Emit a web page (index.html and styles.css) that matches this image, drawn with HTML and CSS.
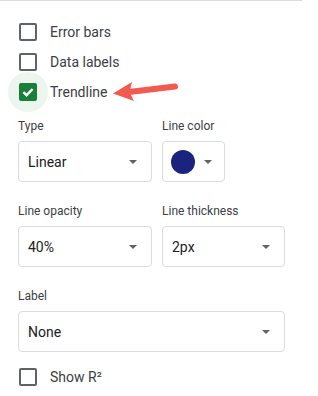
FILE: index.html
```html
<!DOCTYPE html>
<html lang="en">
<head>
    <meta charset="UTF-8">
    <meta name="viewport" content="width=device-width, initial-scale=1.0">
    <title>Trendline</title>
    <link rel="stylesheet" href="styles.css">
</head>
<body>
    <div class="top-line"></div>

    <div class="panel">
        <!-- Opciones de serie -->
        <div class="checks">
            <label class="check-row"><span class="box"></span>Error bars</label>
            <label class="check-row"><span class="box"></span>Data labels</label>
            <label class="check-row">
                <span class="box checked">
                    <svg width="14" height="14" viewBox="0 0 14 14"><path d="M2.4 7.1 L5.6 10.2 L11.6 4" fill="none" stroke="#fff" stroke-width="2.4"/></svg>
                </span>Trendline
            </label>
            <svg class="arrow" width="72" height="28" viewBox="0 0 72 28">
                <line x1="19" y1="14" x2="65" y2="8.5" stroke="#f25a4f" stroke-width="6" stroke-linecap="round"/>
                <polygon points="3,15.5 22,4 19.5,14 24,23" fill="#f25a4f"/>
            </svg>
        </div>

        <div class="fields">
            <div class="field">
                <div class="field-label">Type</div>
                <div class="select"><span>Linear</span><span class="caret"></span></div>
            </div>
            <div class="field">
                <div class="field-label">Line color</div>
                <div class="select color-select"><span class="swatch"></span><span class="caret"></span></div>
            </div>
            <div class="field">
                <div class="field-label">Line opacity</div>
                <div class="select"><span>40%</span><span class="caret"></span></div>
            </div>
            <div class="field">
                <div class="field-label">Line thickness</div>
                <div class="select"><span>2px</span><span class="caret"></span></div>
            </div>
            <div class="field wide">
                <div class="field-label">Label</div>
                <div class="select"><span>None</span><span class="caret"></span></div>
            </div>
        </div>

        <label class="check-row r2"><span class="box"></span>Show R²</label>
    </div>
</body>
</html>
```

FILE: styles.css
```css
body {
    font-family: Roboto, Arial, sans-serif;
    margin: 0;
    padding: 0;
    background: #fff;
    color: #3c4043;
}

.top-line {
    width: 302px;
    height: 1px;
    background-color: #dadce0;
}

.panel {
    padding: 16px 0 0 19px;
}

.checks {
    position: relative;
}

.check-row {
    display: flex;
    align-items: center;
    height: 30px;
    font-size: 14px;
    color: #3c4043;
}

.box {
    position: relative;
    box-sizing: border-box;
    width: 18px;
    height: 18px;
    border: 2px solid #5f6368;
    border-radius: 2px;
    margin-right: 13px;
    display: flex;
    align-items: center;
    justify-content: center;
}

.box.checked {
    background-color: #188038;
    border-color: #188038;
}

.box.checked::before {
    content: "";
    position: absolute;
    left: -13px;
    top: -13px;
    width: 40px;
    height: 40px;
    border-radius: 50%;
    background-color: rgba(24, 128, 56, 0.08);
    z-index: -1;
}

.box svg {
    display: block;
}

.arrow {
    position: absolute;
    left: 91px;
    top: 61px;
}

.fields {
    display: grid;
    grid-template-columns: 134px 123px;
    column-gap: 10px;
    row-gap: 21px;
    margin-top: 11px;
    margin-left: -1px;
}

.field.wide {
    grid-column: 1 / 3;
}

.field-label {
    font-size: 12px;
    line-height: 16px;
    color: #3c4043;
    margin-bottom: 7px;
}

.select {
    box-sizing: border-box;
    height: 41px;
    border: 1px solid #dadce0;
    border-radius: 4px;
    display: flex;
    align-items: center;
    justify-content: space-between;
    padding: 0 14px 0 9px;
    font-size: 14px;
    color: #202124;
}

.color-select {
    width: 63px;
    padding: 0 12px 0 8px;
}

.swatch {
    width: 24px;
    height: 24px;
    border-radius: 50%;
    background-color: #1a237e;
}

.caret {
    width: 0;
    height: 0;
    border-left: 4px solid transparent;
    border-right: 4px solid transparent;
    border-top: 4px solid #5f6368;
}

.check-row.r2 {
    margin-top: 10px;
}
```
